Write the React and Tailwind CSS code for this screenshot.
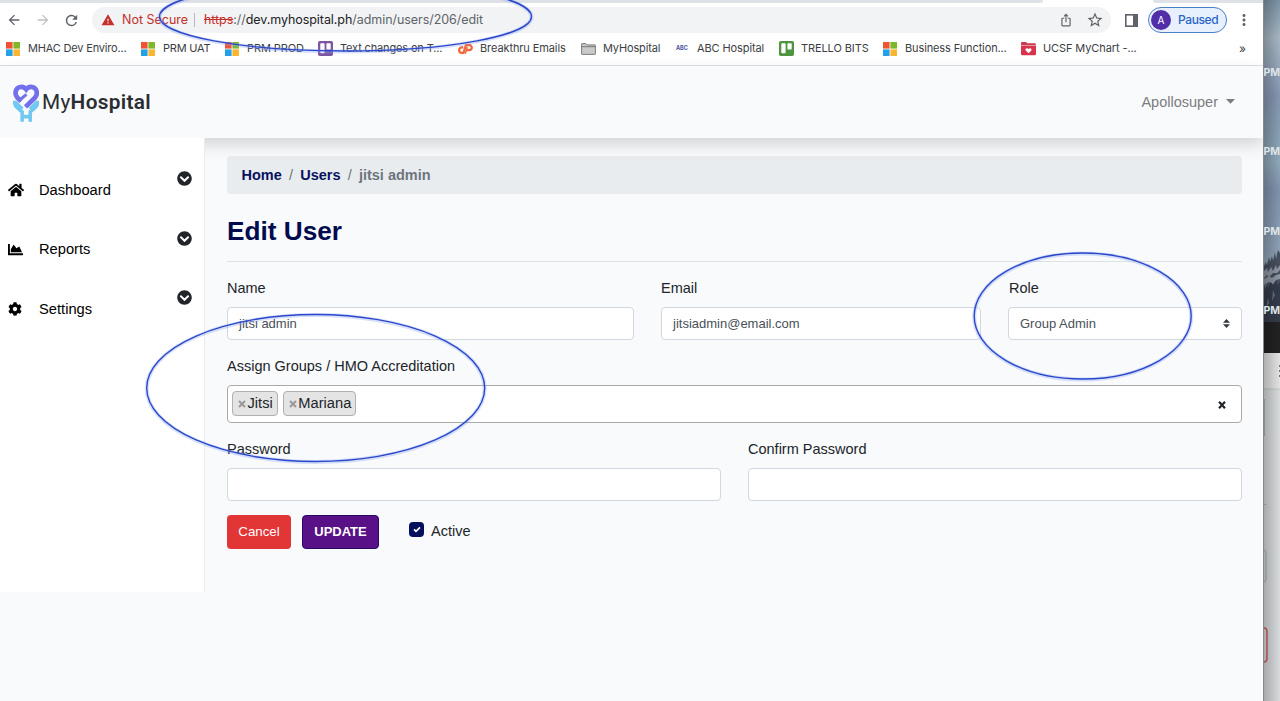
import React from "react";
import { FaHome, FaChartArea, FaCog, FaChevronCircleDown } from "react-icons/fa";
import { MdArrowBack, MdArrowForward, MdRefresh, MdWarning, MdIosShare, MdStarOutline, MdMoreVert } from "react-icons/md";

const sans = "font-['Liberation_Sans',Arial,sans-serif]";
const ui = "font-['Inter',sans-serif]";

function Microsoft() {
  return (
    <svg width="14" height="14" viewBox="0 0 14 14">
      <path fill="#ef5332" d="M0 0h6.6v6.6H0z" />
      <path fill="#80b728" d="M7.4 0H14v6.6H7.4z" />
      <path fill="#24a1e6" d="M0 7.4h6.6V14H0z" />
      <path fill="#fbb631" d="M7.4 7.4H14V14H7.4z" />
    </svg>
  );
}

function Trello({ color }) {
  return (
    <svg width="15" height="15" viewBox="0 0 15 15">
      <rect width="15" height="15" rx="1.8" fill={color} />
      <rect x="2.3" y="2.3" width="4.3" height="10" rx="0.8" fill="#fff" />
      <rect x="8.4" y="2.3" width="4.3" height="6.2" rx="0.8" fill="#fff" />
    </svg>
  );
}

function Breakthru() {
  return (
    <svg width="15" height="12" viewBox="0 0 15 12" fill="none" stroke="#f2683c" strokeWidth="2.3">
      <path d="M5.200 4.400H3.800A2.600 2.600 0 0 0 3.800 9.800H5.500L8 2H11.200A2.500 2.500 0 0 1 11.200 7.100H9" />
      <path d="M9.300 4 7.300 10.800" strokeWidth="1.500" />
    </svg>
  );
}

function Folder() {
  return (
    <svg width="15" height="12" viewBox="0 0 15 12">
      <path d="M.6 10.9V1.1q0-.5.5-.5h3.8l1.2 1.3h7.8q.5 0 .5.5v8.5q0 .5-.5.5H1.1q-.5 0-.5-.5Z" fill="#c9c9c9" stroke="#707070" strokeWidth=".9" />
      <path d="M.8 3.7h13.4" stroke="#707070" strokeWidth=".9" />
    </svg>
  );
}

function HeartFolder() {
  return (
    <svg width="15" height="14" viewBox="0 0 15 14">
      <path d="M0 1q0-1 1-1h4l1.3 1.3H14q.8 0 .8.8V3H0Z" fill="#c93a50" />
      <path d="M0 3.6h15V12q0 1.3-1.3 1.3H1.3Q0 13.300 0 12Z" fill="#d5364d" />
      <path d="M7.5 11.200 4.700 8.400C3.600 6.700 6 5.200 7.500 6.900 9 5.200 11.400 6.700 10.300 8.400Z" fill="#fff" />
    </svg>
  );
}

const bookmarks = [
  { label: "MHAC Dev Enviro...", width: "w-[135px]", track: "tracking-[-0.18px]", icon: <Microsoft /> },
  { label: "PRM UAT", width: "w-[84px]", track: "tracking-[-0.2px]", icon: <Microsoft /> },
  { label: "PRM PROD", width: "w-[93px]", track: "tracking-[-0.1px]", icon: <Microsoft /> },
  { label: "Text changes on T...", width: "w-[140px]", track: "tracking-[-0.15px]", icon: <Trello color="#7d55a0" /> },
  { label: "Breakthru Emails", width: "w-[123px]", track: "tracking-[-0.1px]", icon: <Breakthru /> },
  { label: "MyHospital", width: "w-[94px]", track: "tracking-[-0.15px]", icon: <Folder /> },
  {
    label: "ABC Hospital", width: "w-[104px]", track: "tracking-[-0.1px]",
    icon: <span className="pl-[1px] text-[5.500px] font-bold text-[#4a4fa0]">ABC</span>,
  },
  { label: "TRELLO BITS", width: "w-[104px]", track: "tracking-[-0.1px]", icon: <Trello color="#4f9440" /> },
  { label: "Business Function...", width: "w-[138px]", track: "tracking-[-0.12px]", icon: <Microsoft /> },
  { label: "UCSF MyChart -...", width: "w-[218px]", track: "tracking-[-0.1px]", icon: <HeartFolder /> },
];

function Browser() {
  return (
    <div className={`flex h-[66px] shrink-0 flex-col border-b border-[#dcdfe3] bg-white ${ui}`}>
      <div className="flex h-[3px] justify-between">
        <div className="w-[1043px] rounded-br-[3px] bg-[#dee1e6]" />
        <div className="w-[110px] rounded-bl-[3px] bg-[#dee1e6]" />
      </div>
      <div className="flex h-[34px] items-center pl-[6px] text-[#5f6368]">
        <MdArrowBack className="size-[16px]" />
        <MdArrowForward className="ml-[13px] size-[16px] text-[#bdc0c3]" />
        <MdRefresh className="ml-[12px] size-[17px]" />
        <div className="ml-[12px] flex h-[26px] w-[1019px] items-center rounded-full bg-[#f1f3f4] pl-[9px] text-[12.5px]">
          <MdWarning className="size-[14px] shrink-0 text-[#c5302b]" />
          <span className="ml-[7px] w-[66px] shrink-0 whitespace-nowrap text-[#c5302b]">Not Secure</span>
          <span className="ml-[6px] h-[14px] w-px bg-[#b4b7bb]" />
          <span className="ml-[9px] flex-1 whitespace-nowrap tracking-[-0.06px]">
            <span className="text-[#c5302b] line-through">https</span>://<span className="text-[#202124]">dev.myhospital.ph</span>/admin/users/206/edit
          </span>
          <MdIosShare className="size-[14px]" />
          <MdStarOutline className="ml-[13px] mr-[7px] size-[18px]" />
        </div>
        <svg className="ml-[14px]" width="13" height="13" viewBox="0 0 13 13">
          <rect x=".8" y=".8" width="11.400" height="11.400" fill="none" stroke="#5f6368" strokeWidth="1.6" />
          <path d="M8 0h5v13H8z" fill="#5f6368" />
        </svg>
        <div className="ml-[10px] flex h-[26px] w-[79px] items-center rounded-full border border-[#4a7fc9] bg-[#e8f0fd] pl-[2px]">
          <span className="flex size-[20px] items-center justify-center rounded-full bg-[#512da8] text-[10px] text-white">A</span>
          <span className="ml-[7px] text-[12px] font-medium tracking-[-0.4px] text-[#2864c7]">Paused</span>
        </div>
        <MdMoreVert className="ml-[8px] size-[18px]" />
      </div>
      <div className="flex h-[23px] items-center pl-[6px] text-[11px] text-[#3c4043]">
        {bookmarks.map((b) => (
          <div key={b.label} className={`flex shrink-0 items-center ${b.width}`}>
            <span className="flex w-[22px] shrink-0 items-center">{b.icon}</span>
            <span className={`whitespace-nowrap ${b.track}`}>{b.label}</span>
          </div>
        ))}
        <span className="text-[12px]">»</span>
      </div>
    </div>
  );
}

function Header() {
  return (
    <header className="relative z-10 flex h-[72px] shrink-0 items-center bg-[#f8fafc] pl-[13px] pr-[28px] pt-[2px] shadow-[0_7px_15px_rgba(0,0,0,0.15)]">
      <svg width="26" height="38" viewBox="14 12 77 113" fill="none">
        <path d="M19 62V70Q20 78 27 83L41 95V124M87 62V70Q86 78 79 83L65 95V124M41 109H65" stroke="#72c8f1" strokeWidth="10.500" />
        <path d="M21 66 42 86M85 66 64 86" stroke="#72c8f1" strokeWidth="10" />
        <path d="M38 63 27 53C17 41 21 24 35 21Q45 18 53 28 61 18 71 21C85 24 89 41 79 53L51 80" stroke="#7470ec" strokeWidth="14" />
        <path d="M32 61 54 43" stroke="#7470ec" strokeWidth="9" />
      </svg>
      <span className="ml-[3px] font-['Roboto',sans-serif] text-[20.800px] tracking-[0.3px] text-[#2b2d31]">
        My<b className="font-semibold">Hospital</b>
      </span>
      <span className={`ml-auto text-[14.500px] text-[#7b7d7f] ${sans}`}>Apollosuper</span>
      <svg className="mb-[3px] ml-[8px]" width="9" height="5" viewBox="0 0 9 5"><path d="M0 0h9L4.500 4.700Z" fill="#7b7d7f" /></svg>
    </header>
  );
}

const nav = [
  { label: "Dashboard", icon: <FaHome className="size-[16px]" /> },
  { label: "Reports", icon: <FaChartArea className="size-[15px]" /> },
  { label: "Settings", icon: <FaCog className="size-[14px]" /> },
];

function Sidebar() {
  return (
    <aside className="relative z-20 h-[454px] w-[205px] shrink-0 border-r border-[#e9ebed] bg-white pt-[22.400px]">
      {nav.map((n) => (
        <div key={n.label} className="flex h-[59.300px] items-center pl-[8px] pr-[12px] text-black">
          <span className="w-[31px]">{n.icon}</span>
          <span className="flex-1 text-[14.700px]">{n.label}</span>
          <FaChevronCircleDown className="mb-[22.500px] size-[15px] text-[#212529]" />
        </div>
      ))}
    </aside>
  );
}

function Field({ label, value, width }) {
  return (
    <div className={width}>
      <div className="h-[29px] text-[14.500px] leading-[20px]">{label}</div>
      <div className="flex h-[33px] items-center rounded-[4px] border border-[#d2d8dd] bg-white px-[11px] text-[13px] text-[#495057]">{value}</div>
    </div>
  );
}

function Tag({ children }) {
  return (
    <span className="flex h-[25px] items-center rounded-[4px] border border-[#b0b0b0] bg-[#e4e4e4] pl-[5px] pr-[4px] text-[14.700px]">
      <svg className="mr-[1.500px] mt-[2px]" width="8" height="8" viewBox="0 0 8 8"><path d="m1 1 6 6m0-6-6 6" stroke="#999" strokeWidth="2" /></svg>
      {children}
    </span>
  );
}

function Content() {
  return (
    <main className="flex-1 pl-[22px] pr-[21px] pt-[18px] text-[#212529]">
      <div className="flex h-[38px] items-center gap-[7.200px] rounded-[4px] bg-[#e9ecef] pl-[14.500px] pt-px text-[14.500px] font-bold text-[#6c757d]">
        <span className="text-[#07125f]">Home</span>
        <span className="font-normal">/</span>
        <span className="text-[#07125f]">Users</span>
        <span className="font-normal">/</span>
        <span>jitsi admin</span>
      </div>
      <h1 className="mt-[20px] h-[48px] border-b border-[#dfe1e3] text-[26.200px] leading-[34px] font-bold text-[#000b4f]">Edit User</h1>
      <div className="mt-[16px] flex">
        <Field label="Name" value="jitsi admin" width="w-[407px]" />
        <Field label="Email" value="jitsiadmin@email.com" width="ml-[27px] w-[320px]" />
        <div className="ml-[27px] w-[234px]">
          <div className="h-[29px] pl-[1px] text-[14.500px] leading-[20px]">Role</div>
          <div className="flex h-[33px] items-center justify-between rounded-[4px] border border-[#d2d8dd] bg-white pl-[11px] pr-[11px] text-[13px] text-[#495057]">
            Group Admin
            <svg width="7" height="9" viewBox="0 0 7 9"><path d="M0 3.800 3.500 0 7 3.800ZM0 5.200h7L3.500 9Z" fill="#343a40" /></svg>
          </div>
        </div>
      </div>
      <div className="mt-[16px] h-[29px] text-[14.500px] leading-[20px]">Assign Groups / HMO Accreditation</div>
      <div className="flex h-[38px] items-center gap-[5px] rounded-[4px] border border-[#aaa] bg-white pb-[2px] pl-[4px]">
        <Tag>Jitsi</Tag>
        <Tag>Mariana</Tag>
        <svg className="ml-auto mr-[15px] mt-[3px]" width="8" height="8" viewBox="0 0 8 8"><path d="m1 .8 6 6.400M7 .8 1 7.200" stroke="#212529" strokeWidth="2.200" /></svg>
      </div>
      <div className="mt-[16px] flex gap-[27px]">
        <Field label="Password" width="w-[494px]" />
        <Field label="Confirm Password" width="w-[494px]" />
      </div>
      <div className="mt-[14px] flex items-center">
        <button className="h-[34px] w-[64px] rounded-[4px] bg-[#e23535] text-[13.300px] text-white">Cancel</button>
        <button className="ml-[11px] h-[34px] w-[77px] rounded-[4px] border border-[#290764] bg-[#581186] text-[13px] font-bold text-white">UPDATE</button>
        <span className="mb-[5px] ml-[30px] flex size-[15px] items-center justify-center rounded-[4px] bg-[#04105d]">
          <svg width="8" height="7" viewBox="0 0 8 7" fill="none"><path d="m1 3.300 2 2L7 1.300" stroke="#fff" strokeWidth="1.700" /></svg>
        </span>
        <span className="mb-[1px] ml-[7px] text-[14.500px]">Active</span>
      </div>
    </main>
  );
}

function Desktop() {
  return (
    <div className="relative w-[17px] shrink-0 overflow-hidden border-l border-[#858a8f]">
      <svg width="16" height="701" viewBox="0 0 16 701">
        <defs>
          <linearGradient id="sky" x1="0" x2="0" y1="0" y2="1">
            <stop offset="0" stopColor="#7e95a8" />
            <stop offset=".14" stopColor="#a9bac6" />
            <stop offset=".36" stopColor="#8798b4" />
            <stop offset=".5" stopColor="#8ba3b7" />
            <stop offset=".6" stopColor="#92abbd" />
            <stop offset=".7" stopColor="#8395b0" />
            <stop offset="1" stopColor="#93a8ba" />
          </linearGradient>
          <linearGradient id="edge" x1="0" x2="1" y1="0" y2="0">
            <stop offset="0" stopColor="#000" stopOpacity=".24" />
            <stop offset="1" stopColor="#000" stopOpacity=".02" />
          </linearGradient>
        </defs>
        <path d="M0 0h16v270H0z" fill="url(#sky)" />
        <path d="M0 266 2 262l1 3 2-8 1 5 2-6 1 5 2-9 1 7 2-9 2 3v70H0Z" fill="#485160" />
        <path d="M0 271l3-3 1 4 3-5 2 4 3-6 1 4 3-4v5l-3 3-4 0-4 4-2-2-3 3ZM0 279l5-3 3 2 4-3 4-1v5l-4 1-3 4-4-2-5 3Z" fill="#8f98a5" />
        <path d="M0 290l2-5 2 3 3-6 2 4 3-5 2 4 2-4v42H0Z" fill="#353c4a" />
        <path d="M1 283l2 1-2 5zM9 290l2 5-3 6zM4 298l1 5-3 5z" fill="#687181" />
        <path d="M0 322h16v31H0z" fill="#222" />
        <path d="M0 353h16v36H0z" fill="#e7e7e7" />
        <path d="M0 389h16v312H0z" fill="#dcdfe1" />
        <path d="M0 389h16" stroke="#c8c8c8" />
        <path d="M0 399h1v37H0zM0 504h2v1H0z" fill="#b4b8bb" />
        <path d="M0 550q2 0 2 3v26q0 3-2 3" stroke="#aeb3b6" fill="none" />
        <path d="M0 628q3 0 3 4v26q0 4-3 4" stroke="#d85d5d" strokeWidth="1.500" fill="none" />
        <path d="M15 365h1v2h-1zm0 5h1v2h-1zm0 5h1v2h-1z" fill="#777" />
        <path d="M0 0h16v701H0z" fill="url(#edge)" />
      </svg>
      <div className={`absolute top-[63.500px] left-[-0.500px] flex flex-col gap-[61.500px] text-[10.500px] leading-[18px] font-bold text-[#dfe4e8] ${ui}`}>
        <span>PM</span><span>PM</span><span>PM</span><span>PM</span>
      </div>
    </div>
  );
}

function Marks() {
  return (
    <svg className="pointer-events-none absolute inset-0 z-30" width="1280" height="701" viewBox="0 0 1280 701" fill="none">
      <g stroke="#8ea4f4" strokeOpacity=".35" strokeWidth="4">
        <ellipse cx="345.500" cy="17" rx="186" ry="34.500" />
        <ellipse cx="315.700" cy="388.500" rx="169" ry="73.500" />
        <ellipse cx="1082.700" cy="316.500" rx="108.500" ry="63" />
      </g>
      <g stroke="#2a48c9" strokeWidth="1.400">
        <ellipse cx="345.500" cy="16.500" rx="186" ry="34.500" />
        <ellipse cx="315.700" cy="388" rx="169" ry="73.500" />
        <ellipse cx="1082.700" cy="316" rx="108.500" ry="63" />
      </g>
    </svg>
  );
}

export default function App() {
  return (
    <div className={`relative flex h-[701px] w-[1280px] overflow-hidden bg-[#f8fafc] ${sans}`}>
      <div className="flex w-[1263px] shrink-0 flex-col overflow-hidden">
        <Browser />
        <Header />
        <div className="flex flex-1">
          <Sidebar />
          <Content />
        </div>
      </div>
      <Desktop />
      <Marks />
    </div>
  );
}
